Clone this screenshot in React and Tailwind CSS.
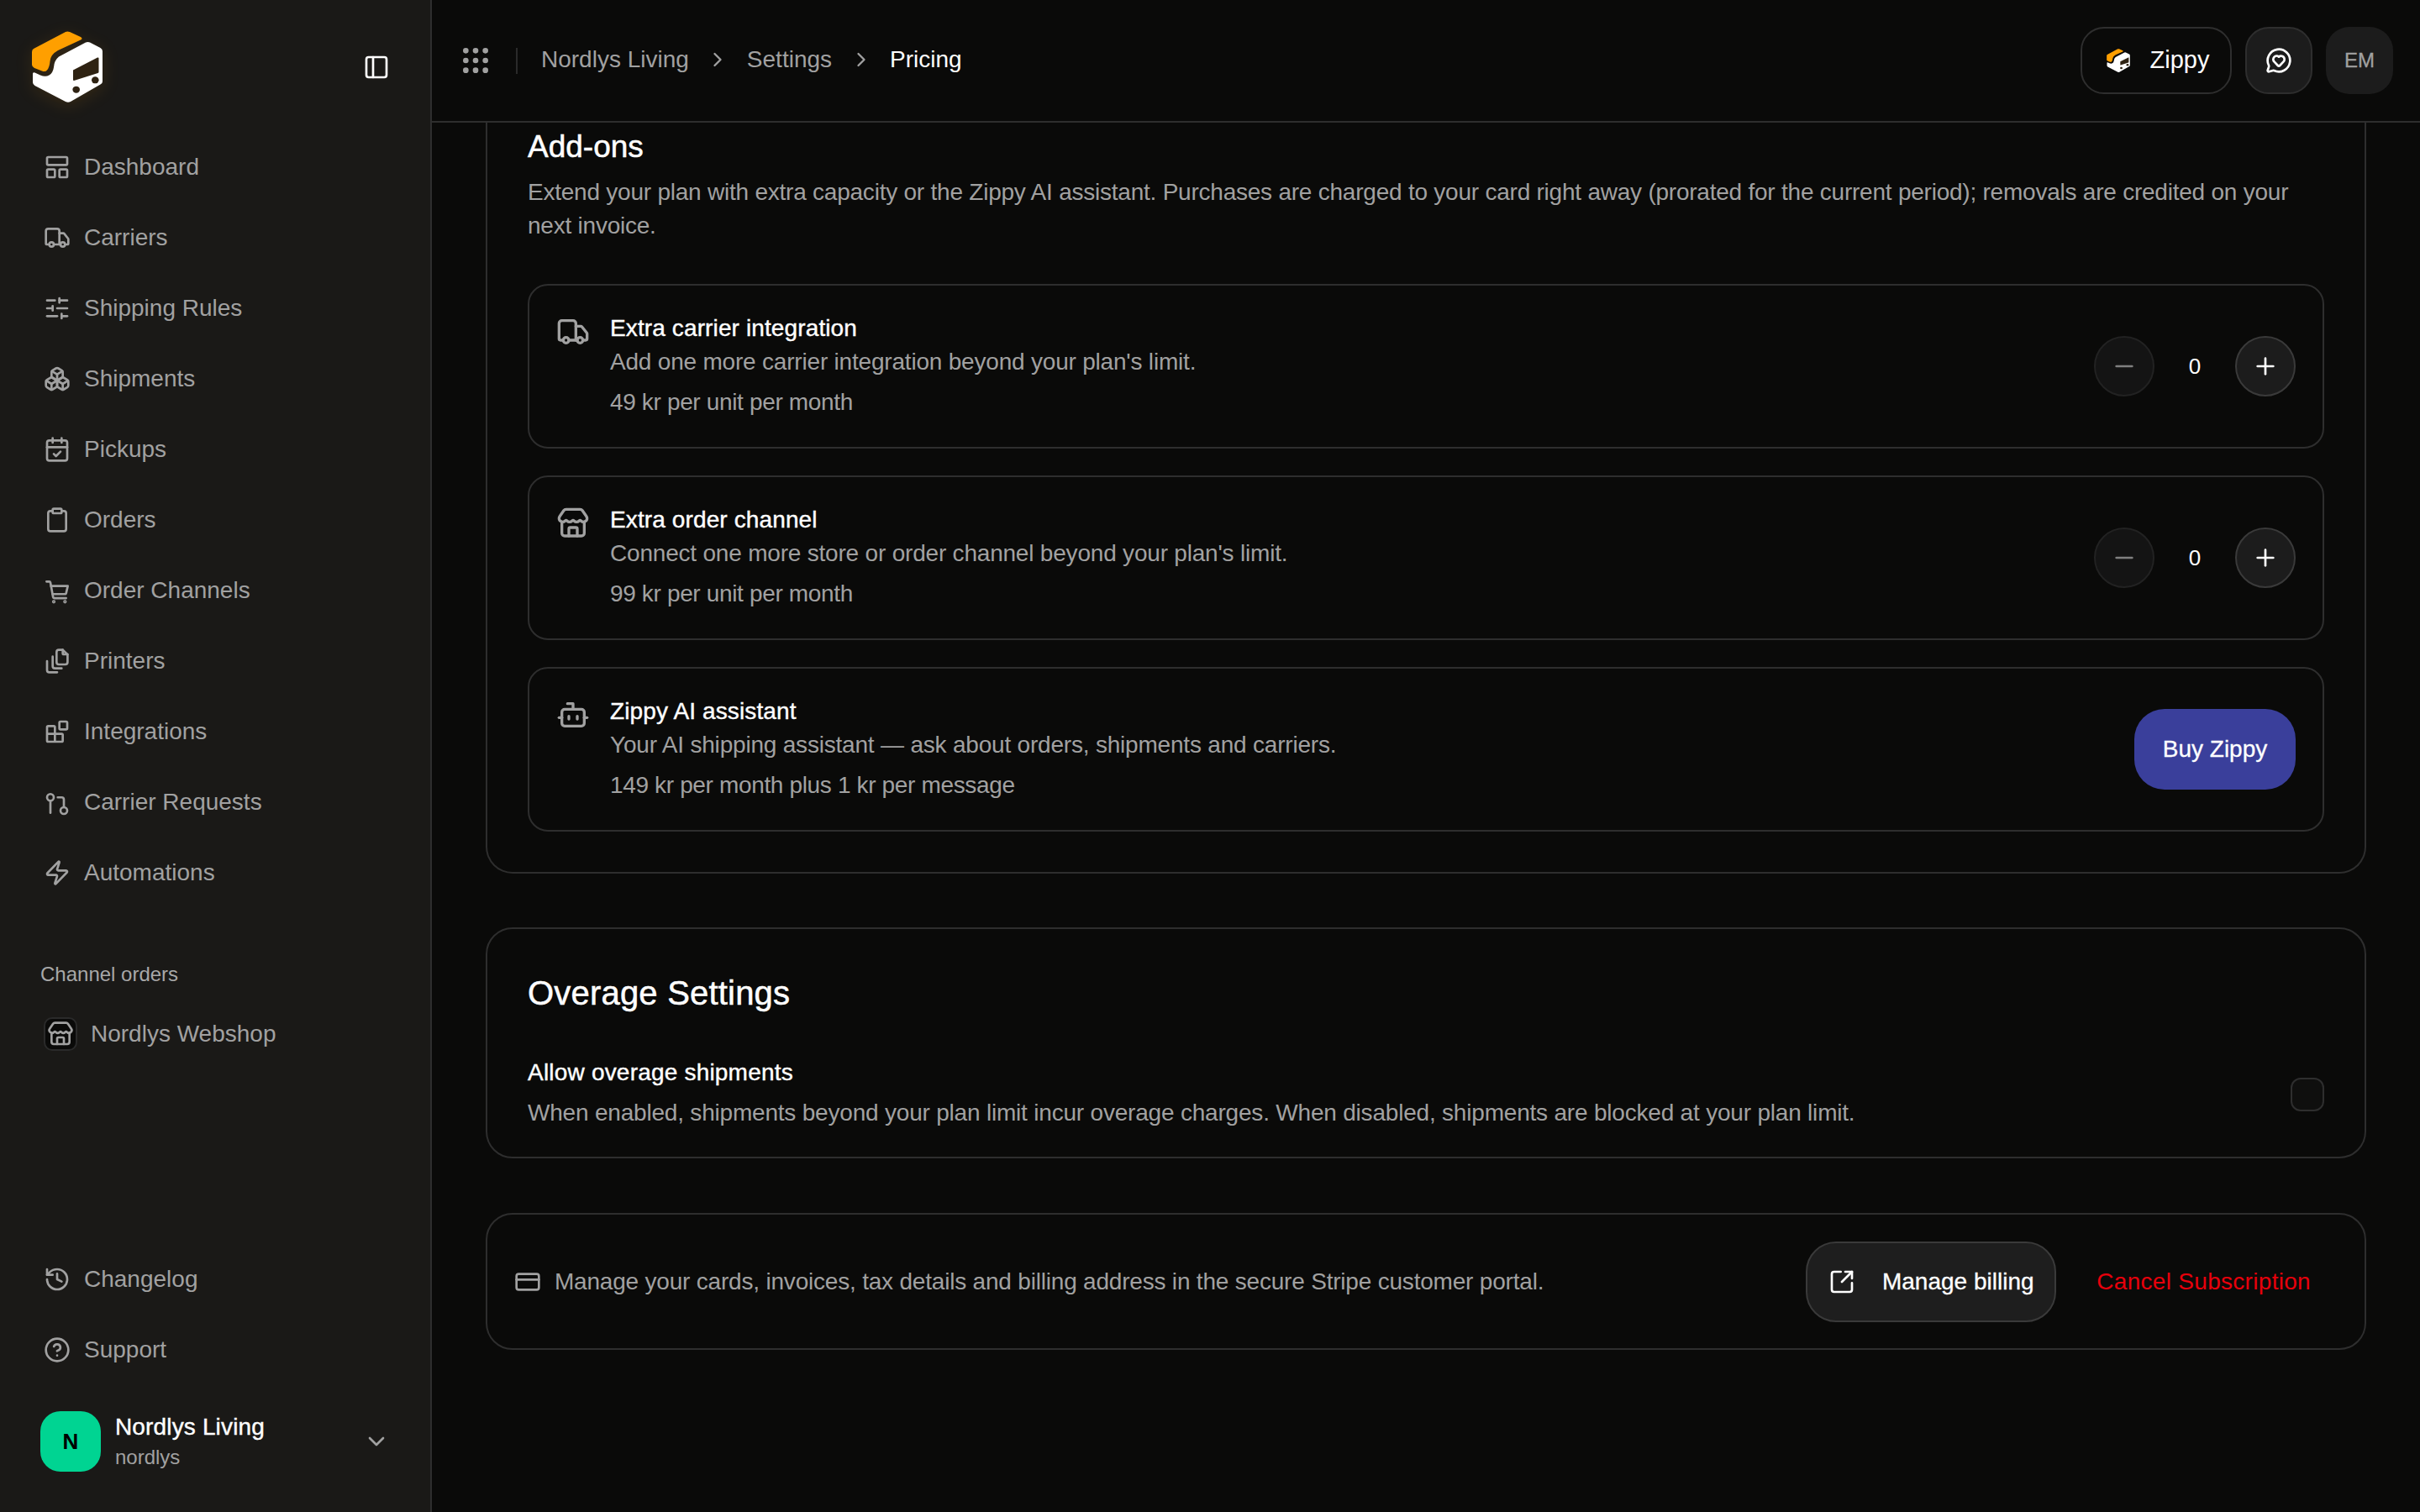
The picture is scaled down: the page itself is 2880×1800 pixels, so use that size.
import {
  LayoutPanelTop, Truck, SlidersHorizontal, Boxes, CalendarCheck, Clipboard,
  Zap, History, CircleHelp, Store, ChevronDown, ChevronRight, PanelLeft, Grip,
  MessageCircleHeart, Bot, Minus, Plus, CreditCard, SquareArrowOutUpRight,
} from 'lucide-react'

const Glyph = ({ children, ...props }) => (
  <svg width="32" height="32" viewBox="0 0 24 24" fill="none" stroke="currentColor" strokeWidth="2" strokeLinecap="round" strokeLinejoin="round" {...props}>
    {children}
  </svg>
)

const PrintersIcon = (props) => (
  <Glyph {...props}>
    <path d="M13.5 2h3.5l4.3 4.2v6.8a2 2 0 0 1-2 2h-5.800a2 2 0 0 1-2-2V4a2 2 0 0 1 2-2z" />
    <path d="M17 2v3a1 1 0 0 0 1 1h3.300" />
    <path d="M8 8v8.500a2 2 0 0 0 2 2h6" />
    <path d="M3 12v8a2 2 0 0 0 2 2h7" />
  </Glyph>
)

const RequestsIcon = (props) => (
  <Glyph {...props}>
    <circle cx="6" cy="7.700" r="3" />
    <path d="M6 10.700v10.800" />
    <circle cx="18" cy="19.500" r="3" />
    <path d="M12.500 7.700H16a2 2 0 0 1 2 2v6.800" />
  </Glyph>
)

const CartIcon = (props) => (
  <Glyph {...props}>
    <path d="M2.500 4H5a1 1 0 0 1 1 .8L8.400 18a1 1 0 0 0 1 .8H20" />
    <path d="M6.500 8h15l-1.500 6.500a1 1 0 0 1-1 .7H8" />
    <circle cx="9" cy="22" r=".6" />
    <circle cx="19" cy="22" r=".6" />
  </Glyph>
)

const BlocksIcon = (props) => (
  <Glyph {...props}>
    <rect x="14" y="3" width="7" height="7" rx="1" />
    <path d="M10 21V8a1 1 0 0 0-1-1H4a1 1 0 0 0-1 1v12a1 1 0 0 0 1 1h12a1 1 0 0 0 1-1v-5a1 1 0 0 0-1-1H3" />
  </Glyph>
)

// box logo, same drawing in the sidebar and on the Zippy button
const Logo = ({ className, viewBox = '32 32 96 96' }) => (
  <svg viewBox={viewBox} className={className}>
    <path fill="#ff9f00" d="M40 58 L78 38 Q80 37 83 38 L96 44 Q99 46 96 47.500 L69 60 Q60 65 59.500 73 Q59 80 56 83.500 Q54 86 50 84.500 L41 81 Q38 79.500 38 77 L38 62 Q38 59 40 58 Z" />
    <path fill="#fff" d="M70 67.500 L102 50.500 Q104.500 49.500 107 50.500 L119.500 57 Q122 58.500 122 61 L122 97 Q122 99.500 119.500 100.500 L84 121 Q81 122.500 78 121 L41.500 102 Q39 100.500 39 98 L39 88 Q39 85.500 41.500 86.500 L48 89.500 Q54 92 58.500 89.500 Q63 87 64 80 Q64.500 72 70 67.500 Z" />
    <path fill="#2e2212" d="M87 83.500 L116 68.500 Q117.500 68 117.500 69.500 L117.500 85.500 Q117.500 86.500 116.500 87 L88 96 Q87 96 87 95 Z" />
    <ellipse cx="90.700" cy="106.700" rx="4.300" ry="4" fill="#2e2212" />
    <ellipse cx="113.300" cy="95.300" rx="4.300" ry="4" fill="#2e2212" />
  </svg>
)

const NAV = [
  { label: 'Dashboard', icon: LayoutPanelTop },
  { label: 'Carriers', icon: Truck },
  { label: 'Shipping Rules', icon: SlidersHorizontal },
  { label: 'Shipments', icon: Boxes },
  { label: 'Pickups', icon: CalendarCheck },
  { label: 'Orders', icon: Clipboard },
  { label: 'Order Channels', icon: CartIcon },
  { label: 'Printers', icon: PrintersIcon },
  { label: 'Integrations', icon: BlocksIcon },
  { label: 'Carrier Requests', icon: RequestsIcon },
  { label: 'Automations', icon: Zap },
]

const NavItem = ({ label, icon: Icon }) => (
  <a className="flex h-[72px] items-center gap-4 px-5 text-[28px] text-[#a1a1a1]">
    <Icon size={32} className="shrink-0" />
    <span>{label}</span>
  </a>
)

const Sidebar = () => (
  <aside className="flex h-full w-[514px] shrink-0 flex-col border-r-2 border-[#2e2e2e] bg-[#1a1917]">
    <div className="flex h-[128px] items-end justify-between pl-8 pr-12 pt-8">
      <Logo className="h-24 w-24 drop-shadow-[0_4px_10px_rgba(255,160,0,0.12)]" />
      <PanelLeft size={32} className="mb-8 text-white" />
    </div>

    <nav className="mt-[35px] flex flex-col gap-3 px-8">
      {NAV.map(n => <NavItem key={n.label} {...n} />)}
    </nav>

    <div className="mt-[69px] px-8">
      <p className="pl-4 text-[24px] leading-8 text-[#a8a8a8]">Channel orders</p>
      <a className="mt-[19px] flex h-[72px] items-center gap-4 px-5 text-[28px] text-[#a1a1a1]">
        <span className="flex h-10 w-10 items-center justify-center rounded-[10px] border-2 border-[#2a2a2a] bg-[#0a0a09]">
          <Store size={32} />
        </span>
        <span>Nordlys Webshop</span>
      </a>
    </div>

    <div className="mt-auto flex flex-col gap-3 px-8">
      <NavItem label="Changelog" icon={History} />
      <NavItem label="Support" icon={CircleHelp} />
    </div>

    <div className="mb-12 mt-[37px] flex h-[72px] items-center pl-12 pr-12">
      <div className="flex h-[72px] w-[72px] items-center justify-center rounded-[24px] bg-[#00d492] text-[26px] font-bold text-black">N</div>
      <div className="ml-[17px] min-w-0 flex-1">
        <p className="pt-0.5 text-[28px] leading-9 tracking-[0.15px] text-white [-webkit-text-stroke:0.4px_#fff]">Nordlys Living</p>
        <p className="text-[24px] leading-9 text-[#a1a1a1]">nordlys</p>
      </div>
      <ChevronDown size={32} className="text-[#a1a1a1]" />
    </div>
  </aside>
)

const Header = () => (
  <header className="flex h-[146px] shrink-0 items-center border-b-2 border-[#2e2e2e] pl-8 pr-8">
    <Grip size={40} className="text-[#a1a1a1]" />
    <span className="ml-7 h-[31px] w-0.5 bg-[#2a2a2a]" />
    <div className="ml-7 flex items-center gap-[20.5px] pb-0.5 text-[28px] text-[#a1a1a1]">
      <span>Nordlys Living</span>
      <ChevronRight size={28} />
      <span>Settings</span>
      <ChevronRight size={28} />
      <span className="text-white">Pricing</span>
    </div>
    <div className="ml-auto flex items-center gap-4">
      <button className="flex h-20 w-[180px] items-center justify-center gap-6 rounded-[28px] border-2 border-[#2e2e2e] pl-1 text-[29px] text-white">
        <Logo className="h-7 w-7" viewBox="38 37 84 85" />
        Zippy
      </button>
      <button className="flex h-20 w-20 items-center justify-center rounded-[28px] border-2 border-[#2e2e2e] bg-[#1c1c1c] text-white">
        <MessageCircleHeart size={32} />
      </button>
      <div className="flex h-20 w-20 items-center justify-center rounded-[28px] bg-[#1c1c1c] text-[24px] text-[#a1a1a1] [-webkit-text-stroke:0.3px_#a1a1a1]">EM</div>
    </div>
  </header>
)

const Stepper = () => (
  <div className="flex items-center gap-6">
    <button className="flex h-[72px] w-[72px] items-center justify-center rounded-full border-2 border-[#222] bg-[#141414] text-[#808080]">
      <Minus size={32} />
    </button>
    <span className="w-12 text-center text-[26px] text-white">0</span>
    <button className="flex h-[72px] w-[72px] items-center justify-center rounded-full border-2 border-[#3a3a3a] bg-[#1c1c1c] text-white">
      <Plus size={32} />
    </button>
  </div>
)

const AddonCard = ({ icon: Icon, title, desc, price, children }) => (
  <div className="flex h-[196px] items-center justify-between rounded-[24px] border-2 border-[#2e2e2e] px-8">
    <div className="flex items-start gap-6">
      <Icon size={40} className="mt-[2px] shrink-0 text-[#a1a1a1]" />
      <div>
        <p className="text-[28px] leading-9 tracking-[0.12px] text-white [-webkit-text-stroke:0.4px_#fff]">{title}</p>
        <p className="mt-0.5 text-[28px] leading-10 tracking-[-0.2px] text-[#a1a1a1]">{desc}</p>
        <p className="mt-2 text-[28px] leading-10 tracking-[-0.35px] text-[#a1a1a1]">{price}</p>
      </div>
    </div>
    {children}
  </div>
)

export default function App() {
  return (
    <div className="flex h-[1800px] w-[2880px] overflow-hidden bg-[#0a0a09] font-['Liberation_Sans',sans-serif]">
      <Sidebar />

      <div className="flex min-w-0 flex-1 flex-col">
        <Header />

        <main className="flex-1 px-16">
          {/* scrolled page: the top of this section sits under the header */}
          <section className="rounded-b-[32px] border-x-2 border-b-2 border-[#2e2e2e] px-12 pb-12 pt-[5px]">
            <h2 className="text-[37px] leading-[48px] text-white [-webkit-text-stroke:0.5px_#fff]">Add-ons</h2>
            <p className="mt-[10px] text-[28px] leading-10 tracking-[-0.23px] text-[#a1a1a1]">
              Extend your plan with extra capacity or the Zippy AI assistant. Purchases are charged to your card right away (prorated for the current period); removals are credited on your next invoice.
            </p>

            <div className="mt-[49px] flex flex-col gap-8">
              <AddonCard icon={Truck} title="Extra carrier integration" desc="Add one more carrier integration beyond your plan's limit." price="49 kr per unit per month">
                <Stepper />
              </AddonCard>
              <AddonCard icon={Store} title="Extra order channel" desc="Connect one more store or order channel beyond your plan's limit." price="99 kr per unit per month">
                <Stepper />
              </AddonCard>
              <AddonCard icon={Bot} title="Zippy AI assistant" desc="Your AI shipping assistant — ask about orders, shipments and carriers." price="149 kr per month plus 1 kr per message">
                <button className="flex h-24 w-48 items-center justify-center rounded-[36px] bg-[#3a3f9b] text-[28px] text-white [-webkit-text-stroke:0.3px_#fff]">Buy Zippy</button>
              </AddonCard>
            </div>
          </section>

          <section className="mt-16 rounded-[32px] border-2 border-[#2e2e2e] px-12 pb-8 pt-[50px]">
            <h2 className="text-[40px] leading-[52px] tracking-[0.2px] text-white [-webkit-text-stroke:0.5px_#fff]">Overage Settings</h2>
            <div className="mt-[49px] flex items-center justify-between">
              <div>
                <p className="text-[28px] leading-10 tracking-[0.2px] text-white [-webkit-text-stroke:0.4px_#fff]">Allow overage shipments</p>
                <p className="mt-2 text-[28px] leading-10 tracking-[-0.2px] text-[#a1a1a1]">When enabled, shipments beyond your plan limit incur overage charges. When disabled, shipments are blocked at your plan limit.</p>
              </div>
              <span className="mt-1 h-10 w-10 rounded-xl border-2 border-[#2e2e2e] bg-[#0f0f0e]" />
            </div>
          </section>

          <section className="mt-[65px] flex h-[163px] items-center rounded-[32px] border-2 border-[#2e2e2e] pl-8 pr-10">
            <CreditCard size={32} className="shrink-0 text-[#a1a1a1]" />
            <p className="ml-4 text-[28px] tracking-[-0.2px] text-[#a1a1a1]">Manage your cards, invoices, tax details and billing address in the secure Stripe customer portal.</p>
            <button className="ml-auto flex h-24 w-[298px] items-center justify-center gap-8 rounded-[36px] border-2 border-[#3a3a3a] bg-[#1e1e1e] text-[28px] text-white [-webkit-text-stroke:0.3px_#fff]">
              <SquareArrowOutUpRight size={32} />
              Manage billing
            </button>
            <button className="ml-6 px-6 text-[28px] tracking-[0.3px] text-[#e7000b]">Cancel Subscription</button>
          </section>
        </main>
      </div>
    </div>
  )
}
